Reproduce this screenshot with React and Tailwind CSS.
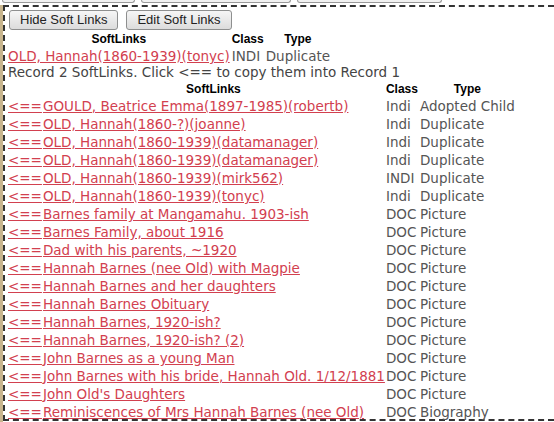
const primary = [
  { name: "OLD, Hannah(1860-1939)(tonyc)", cls: "INDI", type: "Duplicate" },
];

const links = [
  { name: "GOULD, Beatrice Emma(1897-1985)(robertb)", cls: "Indi", type: "Adopted Child" },
  { name: "OLD, Hannah(1860-?)(joanne)", cls: "Indi", type: "Duplicate" },
  { name: "OLD, Hannah(1860-1939)(datamanager)", cls: "Indi", type: "Duplicate" },
  { name: "OLD, Hannah(1860-1939)(datamanager)", cls: "Indi", type: "Duplicate" },
  { name: "OLD, Hannah(1860-1939)(mirk562)", cls: "INDI", type: "Duplicate" },
  { name: "OLD, Hannah(1860-1939)(tonyc)", cls: "Indi", type: "Duplicate" },
  { name: "Barnes family at Mangamahu. 1903-ish", cls: "DOC", type: "Picture" },
  { name: "Barnes Family, about 1916", cls: "DOC", type: "Picture" },
  { name: "Dad with his parents, ~1920", cls: "DOC", type: "Picture" },
  { name: "Hannah Barnes (nee Old) with Magpie", cls: "DOC", type: "Picture" },
  { name: "Hannah Barnes and her daughters", cls: "DOC", type: "Picture" },
  { name: "Hannah Barnes Obituary", cls: "DOC", type: "Picture" },
  { name: "Hannah Barnes, 1920-ish?", cls: "DOC", type: "Picture" },
  { name: "Hannah Barnes, 1920-ish? (2)", cls: "DOC", type: "Picture" },
  { name: "John Barnes as a young Man", cls: "DOC", type: "Picture" },
  { name: "John Barnes with his bride, Hannah Old. 1/12/1881", cls: "DOC", type: "Picture" },
  { name: "John Old's Daughters", cls: "DOC", type: "Picture" },
  { name: "Reminiscences of Mrs Hannah Barnes (nee Old)", cls: "DOC", type: "Biography" },
];

function Btn({ children }) {
  return (
    <button className="h-[20px] px-[10px] rounded-[3px] border border-[#8e8f8f] bg-gradient-to-b from-[#f6f6f6] to-[#dcdcdc] text-[13px] leading-[16px] text-[#222] font-['Liberation_Sans',Arial,sans-serif]">
      {children}
    </button>
  );
}

function Th({ children }) {
  return (
    <th className="h-[16px] px-[1px] py-0 text-center text-[12px] leading-[16px] font-bold text-black font-['Liberation_Sans',Arial,sans-serif]">
      {children}
    </th>
  );
}

export default function App() {
  return (
    <div className="w-[554px] h-[422px] bg-[#c9b68e] pl-[3px] overflow-hidden font-['DejaVu_Sans',Verdana,sans-serif] text-[13.5px]">
      <div className="bg-white h-full">
        {/* cut-off controls above */}
        <div className="flex h-[5px] gap-[6px] pl-[2px] bg-white -ml-[3px]">
          <div className="w-[133px] h-[3px] border-x border-b border-[#9a9a9a] rounded-b-[3px] bg-[#f2f2f2]" />
          <div className="w-[150px] h-[3px] border-x border-b border-[#9a9a9a] rounded-b-[3px] bg-[#f2f2f2]" />
          <div className="w-[145px] h-[3px] border-x border-b border-[#9a9a9a] rounded-b-[3px] bg-[#f2f2f2]" />
        </div>
        <div className="h-[416px] border-l-2 border-t-2 border-b-2 border-dashed border-[#333] pl-[2px]">
          <div className="flex gap-[8px] pl-[2px] pt-[3px]">
            <Btn>Hide Soft Links</Btn>
            <Btn>Edit Soft Links</Btn>
          </div>
          <table className="border-separate border-spacing-0 mt-[1px]">
            <thead>
              <tr>
                <Th>SoftLinks</Th>
                <Th>Class</Th>
                <Th>Type</Th>
              </tr>
            </thead>
            <tbody>
              {primary.map((r, i) => (
                <tr key={i}>
                  <td className="h-[18px] px-[1px] p-0 leading-[18px] whitespace-nowrap">
                    <a href="#" className="text-[#d2404f] underline">{r.name}</a>
                  </td>
                  <td className="px-[1px] leading-[18px] text-[#555]">{r.cls}</td>
                  <td className="px-[1px] leading-[18px] text-[#555]">{r.type}</td>
                </tr>
              ))}
            </tbody>
          </table>
          <div className="pl-[1px] h-[15px] leading-[15px] text-[#444] whitespace-nowrap">
            Record 2 SoftLinks. Click &lt;== to copy them into Record 1
          </div>
          <table className="border-separate border-spacing-0 mt-[1px]">
            <thead>
              <tr>
                <Th></Th>
                <Th>SoftLinks</Th>
                <Th>Class</Th>
                <Th>Type</Th>
              </tr>
            </thead>
            <tbody>
              {links.map((r, i) => (
                <tr key={i}>
                  <td className="h-[18px] pl-[1px] pr-0 leading-[18px] whitespace-nowrap">
                    <a href="#" className="text-[#d2404f] underline">&lt;==</a>
                  </td>
                  <td className="pl-[1px] pr-0 leading-[18px] whitespace-nowrap">
                    <a href="#" className="text-[#d2404f] underline">{r.name}</a>
                  </td>
                  <td className="px-[1px] leading-[18px] text-[#555] whitespace-nowrap">{r.cls}</td>
                  <td className="px-[1px] leading-[18px] text-[#555] whitespace-nowrap">{r.type}</td>
                </tr>
              ))}
            </tbody>
          </table>
        </div>
      </div>
    </div>
  );
}
